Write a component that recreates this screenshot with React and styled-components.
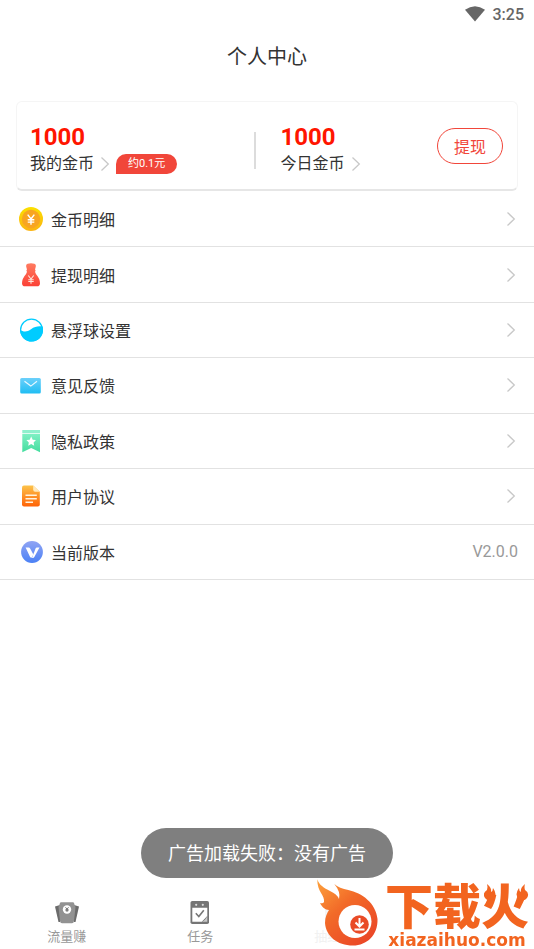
import React from "react";
import styled, { createGlobalStyle } from "styled-components";

const menus = [
  { label: "金币明细", icon: "coin" },
  { label: "提现明细", icon: "bag" },
  { label: "悬浮球设置", icon: "ball" },
  { label: "意见反馈", icon: "mail" },
  { label: "隐私政策", icon: "privacy" },
  { label: "用户协议", icon: "doc" },
];

const Chevron = ({ color = "#c8c8c8" }) => (
  <svg width="10" height="16" viewBox="0 0 10 16" fill="none" aria-hidden="true">
    <path d="M1.5 1.5 8.3 8l-6.8 6.5" stroke={color} strokeWidth="1.3" />
  </svg>
);

const Yen = ({ x, y, s = 1, color = "#fff", w = 1.5 }) => (
  <path
    transform={`translate(${x} ${y}) scale(${s})`}
    d="M-3-4.5 0-.5 3-4.5M0-.5v5.2M-3 .2h6M-3 2.3h6"
    stroke={color}
    strokeWidth={w}
    fill="none"
  />
);

const MenuIcon = ({ name }) => (
  <svg width="24" height="24" viewBox="0 0 24 24" aria-hidden="true">
    {name === "coin" && (
      <>
        <linearGradient id="coinG" x2="0" y2="1">
          <stop stopColor="#fbe000" />
          <stop offset="1" stopColor="#fbb313" />
        </linearGradient>
        <circle cx="12" cy="12" r="12" fill="url(#coinG)" />
        <circle cx="12" cy="12" r="9.2" fill="#f8a521" />
        <Yen x={12} y={12.6} s={1.1} w={1.3} />
      </>
    )}
    {name === "bag" && (
      <>
        <linearGradient id="bagG" x2="0" y2="1">
          <stop stopColor="#ff7c61" />
          <stop offset="1" stopColor="#fb4136" />
        </linearGradient>
        <path
          d="M8.600.7q3.400-1 6.800 0 1.800.6 1.400 2.700-.3 1.700-.8 3 1 .8.1 2.200 0 1.300 1 2.600 3.800 4.200 3.900 9 0 3.100-3 3.100H6q-3 0-3-3.100.1-4.800 3.900-9 1-1.300 1-2.600-.9-1.400.1-2.200-.5-1.300-.8-3Q6.800 1.300 8.600.700z"
          fill="url(#bagG)"
        />
        <Yen x={12} y={16.5} s={0.9} w={1.2} color="#ffe3d8" />
      </>
    )}
    {name === "ball" && (
      <>
        <circle cx="12.5" cy="12" r="10.9" fill="#fff" stroke="#00ccff" strokeWidth="1.2" />
        <path
          d="M1.1 11.700c3.200 2.500 7 2.500 10.900-.4 3.900-2.900 7.700-3.400 11.600-2.700A11.500 11.500 0 1 1 1.100 11.700z"
          fill="#00ccff"
        />
      </>
    )}
    {name === "mail" && (
      <>
        <linearGradient id="mailG" x2="0" y2="1">
          <stop stopColor="#6cd0fb" />
          <stop offset="1" stopColor="#1fbdf3" />
        </linearGradient>
        <rect x="1.2" y="5" width="20.6" height="15.6" rx="1.5" fill="url(#mailG)" />
        <path d="m5.500 8.300 6.300 4.800 6.200-4.800" stroke="#e8f8ff" strokeWidth="1.2" fill="none" />
      </>
    )}
    {name === "privacy" && (
      <>
        <linearGradient id="privacyG" x2="0" y2="1">
          <stop stopColor="#7ff0c4" />
          <stop offset="1" stopColor="#45dd9f" />
        </linearGradient>
        <path d="M3.300 1H21v3H3.300z" fill="#8ff0cd" />
        <path d="M3.300 4.800H21v18.400L12.200 19l-8.900 4.200z" fill="url(#privacyG)" />
        <path
          d="m12.200 7.600 1.500 3.100 3.300.4-2.400 2.300.6 3.400-3-1.700-3 1.700.6-3.400-2.400-2.300 3.300-.4z"
          fill="#fff"
        />
      </>
    )}
    {name === "doc" && (
      <>
        <linearGradient id="docG" x2="0" y2="1">
          <stop stopColor="#fcc34a" />
          <stop offset="1" stopColor="#ff6206" />
        </linearGradient>
        <path
          d="M5 1.500h9.200l6.600 6.300V20.500q0 2-2 2H5q-2 0-2-2V3.500q0-2 2-2z"
          fill="url(#docG)"
        />
        <path d="M14.200 1.500v4.300q0 2 2 2h4.600z" fill="#ffe9bd" />
        <path
          d="M6.500 11.300h11.300M6.500 14.800h11.300M6.500 18.300h7.500"
          stroke="#fff3de"
          strokeWidth="1.4"
        />
      </>
    )}
    {name === "version" && (
      <>
        <linearGradient id="verG" x2="0" y2="1">
          <stop stopColor="#90a4f4" />
          <stop offset="1" stopColor="#4b81f5" />
        </linearGradient>
        <circle cx="13" cy="12" r="10.9" fill="url(#verG)" />
        <path d="M6.600 7.600h3.200q.8 0 1.300.9l3.300 6-1.800 3.300q-.8.300-1.500-.7z" fill="#fff" />
        <path d="m13 17.700 3.600-9.200q.4-.9 1.300-.9h2.600l-5.200 9.500q-1 1.500-2.300.6z" fill="#fff" />
      </>
    )}
  </svg>
);

const WifiIcon = () => (
  <svg width="20" height="16" viewBox="0 0 20 16" aria-hidden="true">
    <path d="M0 3.700Q10-3.300 20 3.700L10 15.500z" fill="#666" />
  </svg>
);

const ScaleIcon = () => (
  <svg width="24" height="24" viewBox="0 0 24 24" aria-hidden="true">
    <path d="m0 5.500 5-1.500v17H3.500z" fill="#6b6b6b" />
    <path d="m24 5.500-5-1.500v17h1.500z" fill="#6b6b6b" />
    <path
      d="M6 1.200h12q1.200 0 1.400 2L20.500 6 19 20q-.2 2.300-2 2.300H7Q5.200 22.300 5 20L3.500 6l1.100-2.800q.2-2 1.400-2z"
      fill="#929292"
    />
    <circle cx="12" cy="8.500" r="4.200" fill="#fff" />
    <Yen x={12} y={8.5} s={0.5} color="#777" w={2} />
  </svg>
);

const TaskIcon = () => (
  <svg width="24" height="24" viewBox="0 0 24 24" aria-hidden="true">
    <rect x="2.5" y="0" width="18.5" height="23" rx="1.8" fill="#757575" />
    <circle cx="8.2" cy="3.8" r="1.1" fill="#ddd" />
    <circle cx="14.8" cy="3.8" r="1.1" fill="#ddd" />
    <path d="M4.300 6.700h15v8.300l-5.500 5.800H4.300z" fill="#fff" />
    <path d="M19.300 15v5.800h-5.500q3.500-1.300 5.500-5.800z" fill="#c9c9c9" />
    <path d="m7.800 12.300 3 3.200 5-6.300" stroke="#777" strokeWidth="1.6" fill="none" />
  </svg>
);

const GiftIcon = () => (
  <svg width="24" height="24" viewBox="0 0 24 24" aria-hidden="true">
    <rect x="3" y="1" width="18" height="22" rx="2" fill="#f4f4f4" />
  </svg>
);

const FlameLogo = () => (
  <svg width="62" height="68" viewBox="0 0 62 68" aria-hidden="true">
    <linearGradient id="flameG" x1="0" y1="0" x2="0.8" y2="1">
      <stop stopColor="#fda23c" />
      <stop offset="0.45" stopColor="#f26a28" />
      <stop offset="1" stopColor="#ea4627" />
    </linearGradient>
    <path
      d="M.3.3C2 6 7 9 13 12q7 3 9 8 2-7-4.700-15 5 4.500 14 6C45 14 59 24 60.500 40 61 56 50 66.500 36 66.500 20 66.500 9 57 8 44 8 38 10 34 12 31 8 31 5 28 3 24q3 1 4-1C8 16 0 13 .3.300z"
      fill="url(#flameG)"
    />
    <circle cx="38" cy="42.5" r="16.5" fill="#fff" />
    <circle cx="42.5" cy="45.5" r="9.3" fill="#e94b27" />
    <path d="M42.500 39v8M38.500 43.500l4 4 4-4M37.500 50.500h10" stroke="#fff" strokeWidth="2" fill="none" />
  </svg>
);

const App = () => {
  return (
    <>
      <GlobalStyle />
      <Wrapper>
        <StatusBar>
          <WifiIcon />
          <span>3:25</span>
        </StatusBar>
        <Title>个人中心</Title>
        <Card>
          <CoinBox $grow={10}>
            <CoinNum>1000</CoinNum>
            <CoinLink href="#">
              我的金币
              <Chevron />
              <Badge>约0.1元</Badge>
            </CoinLink>
          </CoinBox>
          <Divider />
          <CoinBox $grow={7}>
            <CoinNum>1000</CoinNum>
            <CoinLink href="#">
              今日金币
              <Chevron />
            </CoinLink>
          </CoinBox>
          <WithdrawBtn type="button">提现</WithdrawBtn>
        </Card>
        <MenuUl>
          {menus.map((menu) => (
            <MenuLi key={menu.icon}>
              <MenuLink href="#">
                <MenuIcon name={menu.icon} />
                <span>{menu.label}</span>
                <Chevron />
              </MenuLink>
            </MenuLi>
          ))}
          <MenuLi>
            <MenuRow>
              <MenuIcon name="version" />
              <span>当前版本</span>
              <Version>V2.0.0</Version>
            </MenuRow>
          </MenuLi>
        </MenuUl>
        <TabBar>
          <Tab href="#">
            <ScaleIcon />
            流量赚
          </Tab>
          <Tab href="#">
            <TaskIcon />
            任务
          </Tab>
          <Tab href="#" $faded>
            <GiftIcon />
            抽红包
          </Tab>
        </TabBar>
      </Wrapper>
      <Toast role="status">广告加载失败：没有广告</Toast>
      <Brand>
        <FlameLogo />
        <BrandText>
          <BrandName>
            下载火
            <BrandSparks width="48" height="24" viewBox="0 0 48 24" aria-hidden="true">
              <path d="M6 3q5 4 4 8 2-1 2-4 5 7 0 11-5 3-8-1-3-5 2-8 1-3 0-6z" />
              <path d="M44 3q-5 4-4 8-2-1-2-4-5 7 0 11 5 3 8-1 3-5-2-8-1-3 0-6z" />
            </BrandSparks>
          </BrandName>
          <BrandUrl>xiazaihuo.com</BrandUrl>
        </BrandText>
      </Brand>
    </>
  );
};

const GlobalStyle = createGlobalStyle`
  * {
    box-sizing: border-box;
  }
  body {
    margin: 0;
    background: #fff;
    color: #333;
    font-family: Roboto, "Noto Sans CJK SC", sans-serif;
    font-size: 16px;
  }
  a {
    color: inherit;
    text-decoration: none;
  }
  svg {
    display: block;
    flex-shrink: 0;
  }
`;
const Wrapper = styled.div`
  min-height: 100vh;
  display: flex;
  flex-direction: column;
`;
const StatusBar = styled.div`
  height: 28px;
  padding: 0 10px;
  display: flex;
  align-items: center;
  justify-content: flex-end;
  gap: 8px;
  color: #666;
  font-weight: 500;
`;
const Title = styled.h1`
  margin: 0;
  font-size: 20px;
  font-weight: 400;
  line-height: 58px;
  text-align: center;
`;
const Card = styled.section`
  margin: 15px 16px 0;
  padding: 14px 14px 13px 13px;
  display: flex;
  align-items: center;
  border: 1px solid #f5f5f5;
  border-bottom: 2px solid #e6e6e6;
  border-radius: 6px;
`;
const CoinBox = styled.div`
  flex: ${(props) => props.$grow} 1 0;
  padding-top: 6px;
`;
const CoinNum = styled.div`
  color: #ff1500;
  font-size: 24px;
  font-weight: 700;
  line-height: 30px;
`;
const CoinLink = styled.a`
  display: flex;
  align-items: center;
  gap: 6px;
  line-height: 24px;
`;
const Badge = styled.span`
  padding: 0 12px;
  border-radius: 10px 10px 10px 0;
  background: #f1463a;
  color: #fff;
  font-size: 11px;
  line-height: 20px;
`;
const Divider = styled.div`
  width: 2px;
  height: 37px;
  margin: 8px 25px 0 0;
  background: #dcdcdc;
`;
const WithdrawBtn = styled.button`
  padding: 0 16px;
  height: 36px;
  border: 1px solid #f1463a;
  border-radius: 18px;
  background: #fff;
  color: #f1463a;
  font-family: inherit;
  font-size: 16px;
`;
const MenuUl = styled.ul`
  min-height: 388px;
  margin: 1px 0 0;
  padding: 0;
  display: grid;
  grid-auto-rows: 1fr;
  list-style: none;
`;
const MenuLi = styled.li`
  display: flex;
  border-bottom: 1px solid #e2e2e2;
`;
const MenuRow = styled.div`
  flex: 1;
  padding: 0 16px 0 19px;
  display: flex;
  align-items: center;
  gap: 8px;

  span {
    flex: 1;
  }
`;
const MenuLink = styled(MenuRow).attrs({ as: "a" })`
  padding-right: 18px;
`;
const Version = styled.em`
  color: #999;
  font-style: normal;
`;
const TabBar = styled.nav`
  margin-top: auto;
  padding-bottom: 3px;
  display: grid;
  grid-template-columns: repeat(4, 1fr);
`;
const Tab = styled.a`
  display: flex;
  flex-direction: column;
  align-items: center;
  gap: 3px;
  color: ${(props) => (props.$faded ? "#f1f1f1" : "#999")};
  font-size: 13px;
  line-height: 18px;
`;
const Toast = styled.div`
  position: fixed;
  left: 50%;
  bottom: 71px;
  transform: translateX(-50%);
  padding: 2px 27px 0;
  border-radius: 25px;
  background: #7f7f7f;
  color: #fff;
  font-size: 18px;
  line-height: 48px;
  white-space: nowrap;
`;
const Brand = styled.div`
  position: fixed;
  right: 5px;
  bottom: 0;
  display: flex;
  align-items: flex-end;
  gap: 6px;
  color: #f2641f;

  > svg {
    margin-bottom: 2px;
  }
`;
const BrandText = styled.div`
  display: flex;
  flex-direction: column;
  align-items: center;
`;
const BrandName = styled.div`
  position: relative;
  margin-bottom: 6px;
  font-family: "Noto Sans CJK SC", sans-serif;
  font-size: 48px;
  font-weight: 900;
  line-height: 44px;
`;
const BrandSparks = styled.svg`
  position: absolute;
  top: 0;
  right: 0;
  fill: #f2641f;
`;
const BrandUrl = styled.div`
  font-family: "DejaVu Sans", sans-serif;
  font-size: 17px;
  font-weight: 700;
  line-height: 18px;
`;

export default App;
